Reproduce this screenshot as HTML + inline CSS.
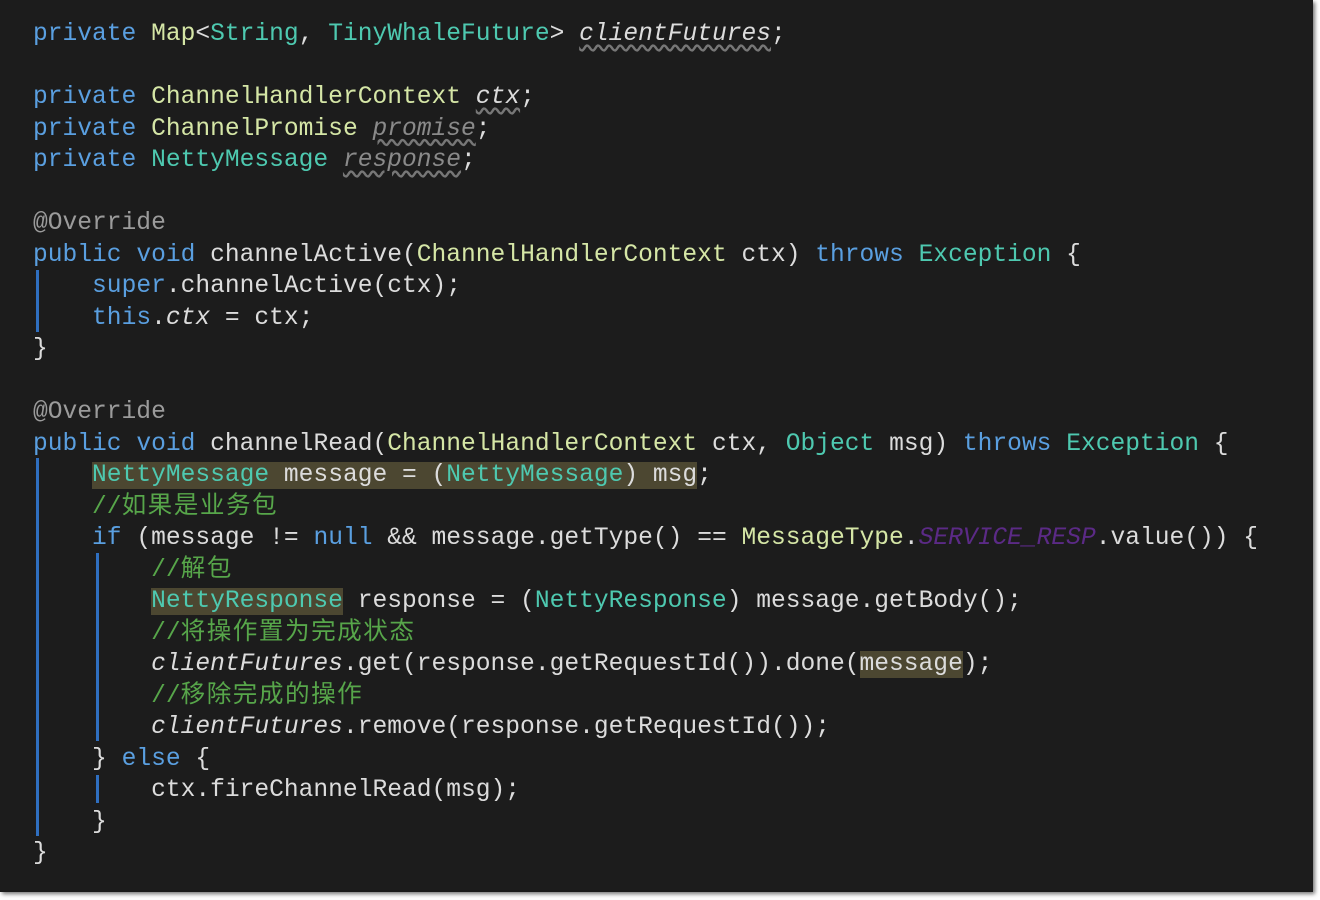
<!DOCTYPE html>
<html><head><meta charset="utf-8"><style>
html,body{margin:0;padding:0;background:#fff;width:1320px;height:900px;overflow:hidden}
#ed{position:absolute;left:0;top:0;width:1313px;height:892px;background:#1c1c1c;box-shadow:2px 2px 4px #777}
pre{position:absolute;left:33px;top:19px;margin:0;font-family:"Liberation Mono","Noto Sans CJK SC",monospace;font-size:24.6px;line-height:31.5px;color:#dcdcdc;white-space:pre}
.k{color:#5a9fe0}.t{color:#4ec9b0}.y{color:#d5e6a6}.c{color:#57a64a}.a{color:#9b9b9b}
.z{letter-spacing:1.5px}
.i{font-style:italic}.g{color:#8a8a8a;font-style:italic;text-decoration:underline wavy #777;text-underline-offset:4px}
.w{font-style:italic;text-decoration:underline wavy #777;text-underline-offset:4px}
.p{color:#5b2a86;font-style:italic}.h{background:#4c4731}
.bar{position:absolute;width:3px;background:#2f6fc0}
</style></head><body><div id="ed">
<div class="bar" style="left:36px;top:270px;height:62px"></div>
<div class="bar" style="left:36px;top:458px;height:378px"></div>
<div class="bar" style="left:96px;top:553px;height:188px"></div>
<div class="bar" style="left:96px;top:775px;height:28px"></div>
<pre><span class="k">private</span> <span class="y">Map</span>&lt;<span class="t">String</span>, <span class="t">TinyWhaleFuture</span>&gt; <span class="w">clientFutures</span>;

<span class="k">private</span> <span class="y">ChannelHandlerContext</span> <span class="w">ctx</span>;
<span class="k">private</span> <span class="y">ChannelPromise</span> <span class="g">promise</span>;
<span class="k">private</span> <span class="t">NettyMessage</span> <span class="g">response</span>;

<span class="a">@Override</span>
<span class="k">public</span> <span class="k">void</span> channelActive(<span class="y">ChannelHandlerContext</span> ctx) <span class="k">throws</span> <span class="t">Exception</span> {
    <span class="k">super</span>.channelActive(ctx);
    <span class="k">this</span>.<span class="i">ctx</span> = ctx;
}

<span class="a">@Override</span>
<span class="k">public</span> <span class="k">void</span> channelRead(<span class="y">ChannelHandlerContext</span> ctx, <span class="t">Object</span> msg) <span class="k">throws</span> <span class="t">Exception</span> {
    <span class="h"><span class="t">NettyMessage</span> message = (<span class="t">NettyMessage</span>) msg</span>;
    <span class="c">//<span class="z">如果是业务包</span></span>
    <span class="k">if</span> (message != <span class="k">null</span> &amp;&amp; message.getType() == <span class="y">MessageType</span>.<span class="p">SERVICE_RESP</span>.value()) {
        <span class="c">//<span class="z">解包</span></span>
        <span class="h"><span class="t">NettyResponse</span></span> response = (<span class="t">NettyResponse</span>) message.getBody();
        <span class="c">//<span class="z">将操作置为完成状态</span></span>
        <span class="i">clientFutures</span>.get(response.getRequestId()).done(<span class="h">message</span>);
        <span class="c">//<span class="z">移除完成的操作</span></span>
        <span class="i">clientFutures</span>.remove(response.getRequestId());
    } <span class="k">else</span> {
        ctx.fireChannelRead(msg);
    }
}</pre></div></body></html>
